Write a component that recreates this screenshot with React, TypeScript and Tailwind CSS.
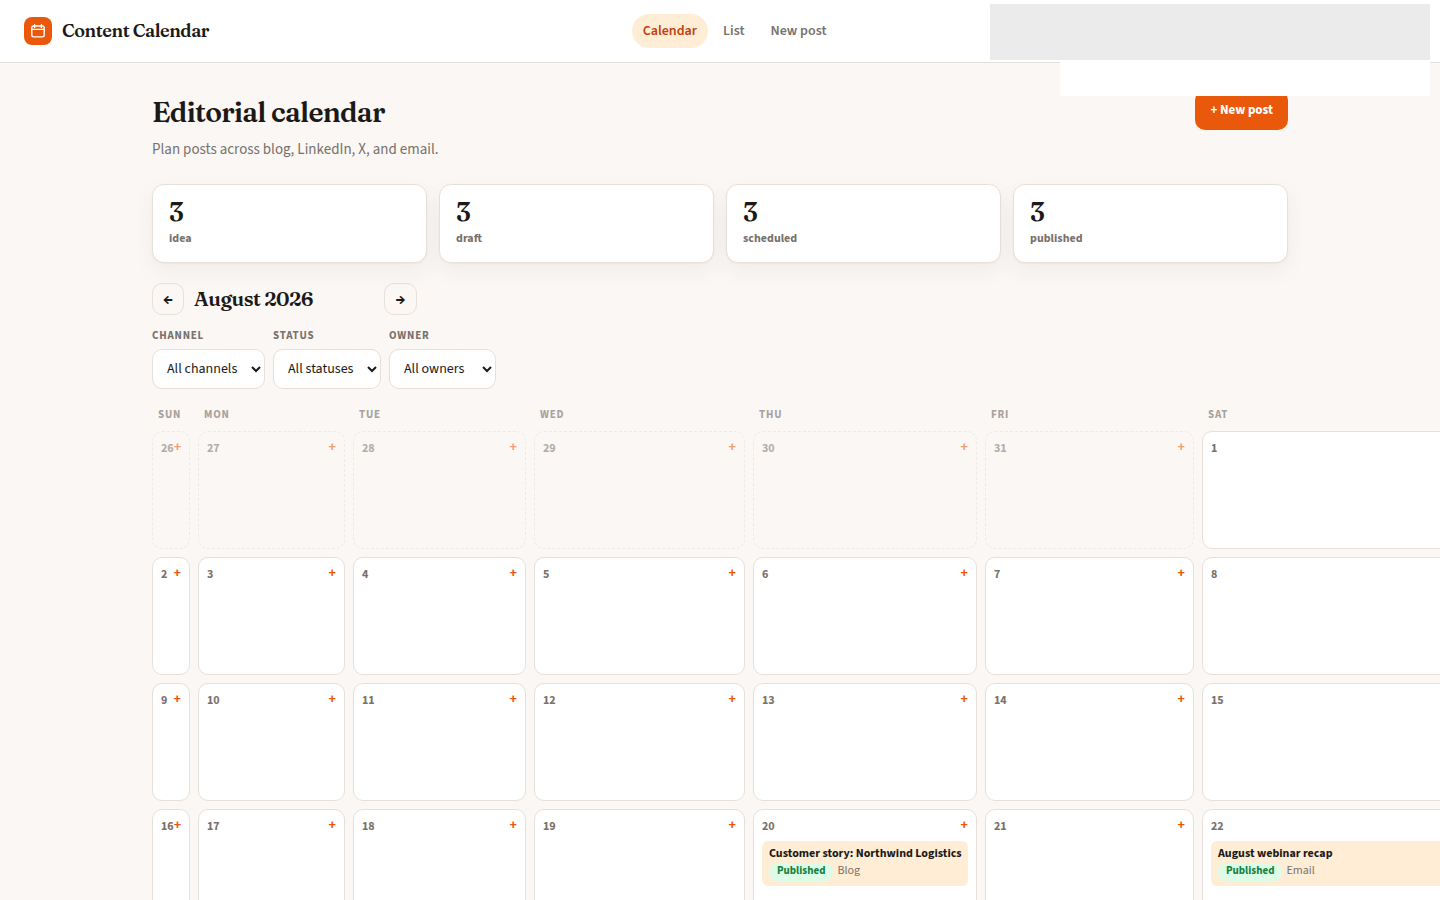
import React from "react";

const stats = ["idea", "draft", "scheduled", "published"];

const filters = [
  { id: "channel", label: "Channel", option: "All channels", width: "w-[113px]" },
  { id: "status", label: "Status", option: "All statuses", width: "w-[108px]" },
  { id: "owner", label: "Owner", option: "All owners", width: "w-[107px]" },
];

const weekdays = ["Sun", "Mon", "Tue", "Wed", "Thu", "Fri", "Sat"];

type Post = { title: string; channel: string };
type Day = { date: number; outside?: boolean; post?: Post };

const posts: Record<number, Post> = {
  20: { title: "Customer story: Northwind Logistics", channel: "Blog" },
  22: { title: "August webinar recap", channel: "Email" },
};

const days: Day[] = [
  ...[26, 27, 28, 29, 30, 31].map((date) => ({ date, outside: true })),
  ...Array.from({ length: 22 }, (_, i) => ({ date: i + 1, post: posts[i + 1] })),
];

const columns = "grid grid-cols-[38px_147px_173px_211px_224px_209px_300px] gap-x-2";
const serif = "font-['Fraunces','Liberation_Serif',serif] font-semibold tracking-tight";

function DayCell({ day, canAdd }: { day: Day; canAdd: boolean }) {
  return (
    <div
      className={
        "min-h-[118px] rounded-[10px] border p-2 " +
        (day.outside ? "border-dashed border-[#e7e0da] bg-[#faf7f4] opacity-55" : "border-[#e7e0da] bg-white")
      }
    >
      <div className="flex items-start justify-between">
        <span className="text-[12px] leading-[18px] font-bold text-[#78716c]">{day.date}</span>
        {canAdd && (
          <button type="button" aria-label="Add post" className="text-[14px] leading-[14px] font-bold text-[#ea580c]">
            +
          </button>
        )}
      </div>
      {day.post && (
        <a href="#post" className="mt-[5px] block rounded-md bg-[#ffedd5] px-[7px] pt-[5px] pb-[3px]">
          <span className="block text-[12px] leading-4 font-bold whitespace-nowrap text-[#1c1917]">{day.post.title}</span>
          <span className="mt-px flex h-5 items-start gap-1 leading-4">
            <span className="rounded-full bg-[#dcfce7] px-2 pb-0.5 text-[11px] font-bold text-[#15803d]">Published</span>
            <span className="text-[12px] text-[#78716c]">{day.post.channel}</span>
          </span>
        </a>
      )}
    </div>
  );
}

export default function App() {
  return (
    <div className="relative min-h-screen bg-[#faf7f4] font-['Source_Sans_3','Noto_Sans_CJK_SC',sans-serif] text-[#1c1917]">
      <header className="flex h-[63px] items-center justify-between border-b border-[#e3dfdb] bg-white px-6">
        <a href="#home" className="flex items-center gap-2.5">
          <span className="flex size-7 items-center justify-center rounded-lg bg-[#ea580c]">
            <svg viewBox="0 0 16 16" className="size-4" fill="none" stroke="white" strokeWidth="1.4" strokeLinecap="round" aria-hidden="true">
              <rect x="1.8" y="3" width="12.4" height="10.9" rx="1.8" />
              <path d="M1.8 6.4h12.4M4.6 1.6v2.8M11.4 1.6v2.8" />
            </svg>
          </span>
          <span className={"text-[18px] leading-7 " + serif}>Content Calendar</span>
        </a>
        <nav className="flex gap-1 text-[14px] leading-[18px] font-semibold text-[#78716c]">
          <a href="#calendar" className="rounded-full bg-[#ffedd5] px-[11px] py-2 text-[#c2410c]">Calendar</a>
          <a href="#list" className="px-[11px] py-2">List</a>
          <a href="#new" className="px-[11px] py-2">New post</a>
        </nav>
        <div className="w-[156px]" />
      </header>
      <div className="absolute top-1 right-2.5 flex w-[440px] flex-col items-end">
        <div className="h-14 w-full bg-[#ebebeb]" />
        <div className="h-9 w-[370px] bg-white" />
      </div>

      <main className="mx-auto max-w-[1136px] pt-[27px]">
        <div className="flex items-start justify-between">
          <div>
            <h1 className={"text-[28px] leading-[44px] " + serif}>Editorial calendar</h1>
            <p className="mt-1 text-[15px] leading-6 text-[#78716c]">Plan posts across blog, LinkedIn, X, and email.</p>
          </div>
          <button type="button" className="h-10 rounded-[10px] bg-[#ea580c] px-[15px] text-[13px] leading-[18px] font-bold text-white">
            + New post
          </button>
        </div>

        <section className="mt-[22px] grid grid-cols-4 gap-3">
          {stats.map((name) => (
            <div key={name} className="h-[79px] rounded-xl border border-[#e7e0da] bg-white px-4 py-[11px] shadow-[0_1px_2px_rgba(28,25,23,0.04),0_8px_24px_rgba(28,25,23,0.05)]">
              <div className={"text-[26px] leading-8 " + serif}>3</div>
              <div className="mt-0.5 text-[12px] leading-[18px] font-bold text-[#78716c]">{name}</div>
            </div>
          ))}
        </section>

        <div className="mt-5 flex items-center">
          <button type="button" aria-label="Previous month" className="size-8 rounded-[10px] border border-[#e7e0da] text-[16px] leading-4 font-bold">
            ←
          </button>
          <h2 className={"ml-2.5 w-[190px] text-[20px] leading-8 " + serif}>August 2026</h2>
          <button type="button" aria-label="Next month" className="h-8 w-[33px] rounded-[10px] border border-[#e7e0da] text-[16px] leading-4 font-bold">
            →
          </button>
        </div>

        <div className="mt-[13px] flex gap-2">
          {filters.map((f) => (
            <div key={f.id} className="flex flex-col gap-[5px]">
              <label htmlFor={f.id} className="text-[11px] leading-4 font-bold tracking-[0.8px] text-[#78716c] uppercase">
                {f.label}
              </label>
              <select id={f.id} className={"h-10 rounded-[10px] border border-[#e7e0da] bg-white pl-2.5 text-[14px] " + f.width}>
                <option>{f.option}</option>
              </select>
            </div>
          ))}
        </div>

        <section className="mt-[18px]">
          <div className={columns}>
            {weekdays.map((d) => (
              <div key={d} className="px-1.5 text-[11px] leading-4 font-bold tracking-[0.8px] text-[#a8a29e] uppercase">
                {d}
              </div>
            ))}
          </div>
          <div className={columns + " mt-2 gap-y-2"}>
            {days.map((day, i) => (
              <DayCell key={(day.outside ? "prev-" : "day-") + day.date} day={day} canAdd={i % 7 !== 6} />
            ))}
          </div>
        </section>
      </main>
    </div>
  );
}
